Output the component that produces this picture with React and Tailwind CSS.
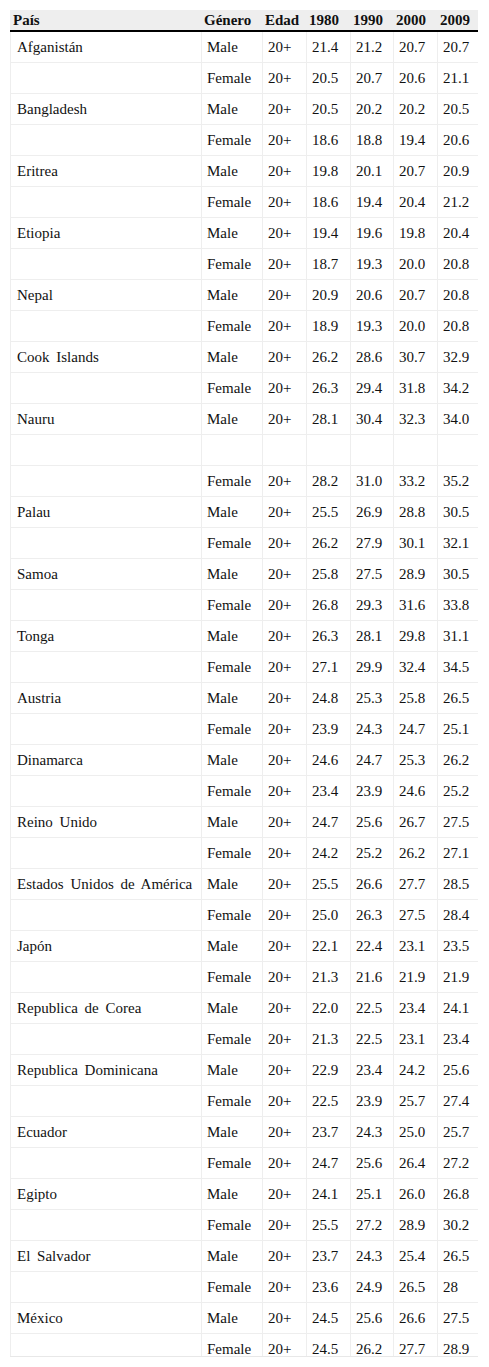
import React from "react";

const rows = [
	["Afganistán", "Male", "21.4", "21.2", "20.7", "20.7"],
	["", "Female", "20.5", "20.7", "20.6", "21.1"],
	["Bangladesh", "Male", "20.5", "20.2", "20.2", "20.5"],
	["", "Female", "18.6", "18.8", "19.4", "20.6"],
	["Eritrea", "Male", "19.8", "20.1", "20.7", "20.9"],
	["", "Female", "18.6", "19.4", "20.4", "21.2"],
	["Etiopia", "Male", "19.4", "19.6", "19.8", "20.4"],
	["", "Female", "18.7", "19.3", "20.0", "20.8"],
	["Nepal", "Male", "20.9", "20.6", "20.7", "20.8"],
	["", "Female", "18.9", "19.3", "20.0", "20.8"],
	["Cook Islands", "Male", "26.2", "28.6", "30.7", "32.9"],
	["", "Female", "26.3", "29.4", "31.8", "34.2"],
	["Nauru", "Male", "28.1", "30.4", "32.3", "34.0"],
	null,
	["", "Female", "28.2", "31.0", "33.2", "35.2"],
	["Palau", "Male", "25.5", "26.9", "28.8", "30.5"],
	["", "Female", "26.2", "27.9", "30.1", "32.1"],
	["Samoa", "Male", "25.8", "27.5", "28.9", "30.5"],
	["", "Female", "26.8", "29.3", "31.6", "33.8"],
	["Tonga", "Male", "26.3", "28.1", "29.8", "31.1"],
	["", "Female", "27.1", "29.9", "32.4", "34.5"],
	["Austria", "Male", "24.8", "25.3", "25.8", "26.5"],
	["", "Female", "23.9", "24.3", "24.7", "25.1"],
	["Dinamarca", "Male", "24.6", "24.7", "25.3", "26.2"],
	["", "Female", "23.4", "23.9", "24.6", "25.2"],
	["Reino Unido", "Male", "24.7", "25.6", "26.7", "27.5"],
	["", "Female", "24.2", "25.2", "26.2", "27.1"],
	["Estados Unidos de América", "Male", "25.5", "26.6", "27.7", "28.5"],
	["", "Female", "25.0", "26.3", "27.5", "28.4"],
	["Japón", "Male", "22.1", "22.4", "23.1", "23.5"],
	["", "Female", "21.3", "21.6", "21.9", "21.9"],
	["Republica de Corea", "Male", "22.0", "22.5", "23.4", "24.1"],
	["", "Female", "21.3", "22.5", "23.1", "23.4"],
	["Republica Dominicana", "Male", "22.9", "23.4", "24.2", "25.6"],
	["", "Female", "22.5", "23.9", "25.7", "27.4"],
	["Ecuador", "Male", "23.7", "24.3", "25.0", "25.7"],
	["", "Female", "24.7", "25.6", "26.4", "27.2"],
	["Egipto", "Male", "24.1", "25.1", "26.0", "26.8"],
	["", "Female", "25.5", "27.2", "28.9", "30.2"],
	["El Salvador", "Male", "23.7", "24.3", "25.4", "26.5"],
	["", "Female", "23.6", "24.9", "26.5", "28"],
	["México", "Male", "24.5", "25.6", "26.6", "27.5"],
	["", "Female", "24.5", "26.2", "27.7", "28.9"],
];

const headers = ["País", "Género", "Edad", "1980", "1990", "2000", "2009"];

const cell = "px-[5px] py-0 leading-[18px] border border-[#eeeeee] font-normal";

export default function App() {
	return (
		<div className="bg-white min-h-[1367px] pt-[10px] px-[10px] font-['Liberation_Serif','Times_New_Roman',Times,serif] text-[15px] text-[#111]">
			{/* table gets cut off at the bottom like the original */}
			<div className="w-[468px] h-[1347px] overflow-hidden border-b border-[#e8e8e8]">
				<table className="w-[468px] table-fixed border-collapse">
					<colgroup>
						<col className="w-[191px]" />
						<col className="w-[61px]" />
						<col className="w-[44px]" />
						<col className="w-[44px]" />
						<col className="w-[43px]" />
						<col className="w-[44px]" />
						<col className="w-[41px]" />
					</colgroup>
					<thead>
						<tr className="bg-[#eeeeee]">
							{headers.map((h) => (
								<th
									key={h}
									className="h-[21px] px-[2px] py-0 text-left font-bold leading-[19px] whitespace-nowrap border-x border-x-[#eeeeee] border-b-2 border-b-black"
								>
									{h}
								</th>
							))}
						</tr>
					</thead>
					<tbody>
						{rows.map((r, i) => (
							<tr key={i} className="h-[31px]">
								{r ? (
									<>
										<td className={cell + " whitespace-nowrap pl-[6px] [word-spacing:3px]"}>{r[0]}</td>
										<td className={cell}>{r[1]}</td>
										<td className={cell}>20+</td>
										<td className={cell}>{r[2]}</td>
										<td className={cell}>{r[3]}</td>
										<td className={cell}>{r[4]}</td>
										<td className={cell}>{r[5]}</td>
									</>
								) : (
									headers.map((h) => (
										<td key={h} className="border border-[#eeeeee]"></td>
									))
								)}
							</tr>
						))}
					</tbody>
				</table>
			</div>
		</div>
	);
}
